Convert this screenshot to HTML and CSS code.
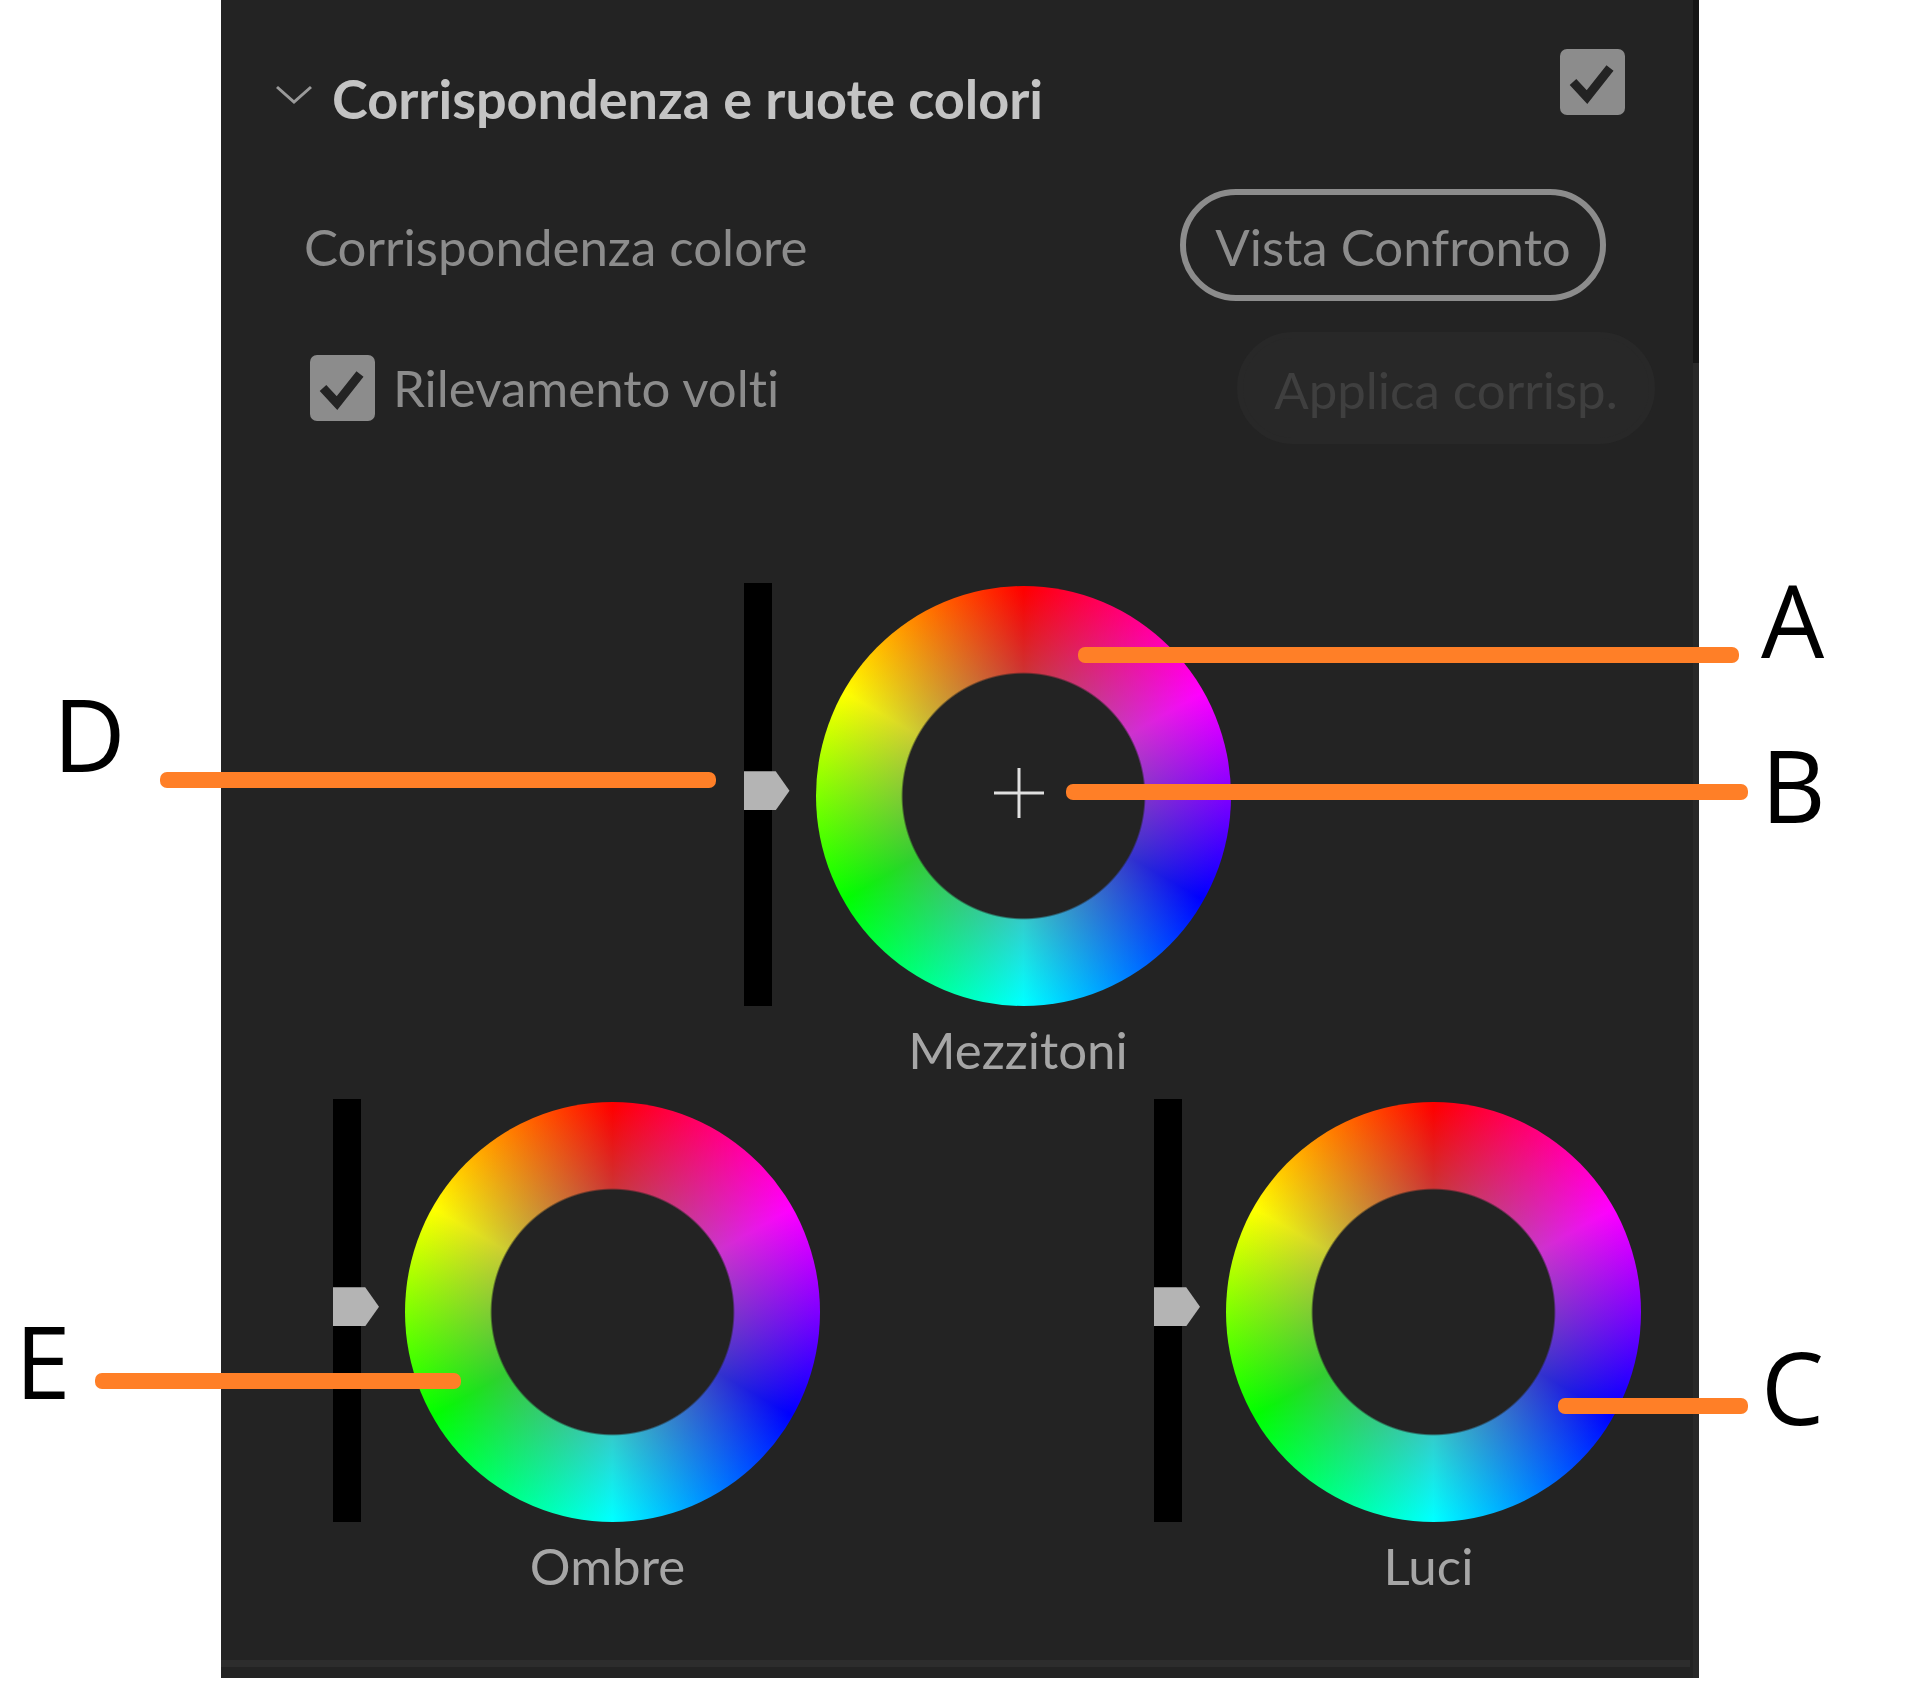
FILE: index.html
```html
<!DOCTYPE html>
<html lang="it">
  <head>
    <meta charset="utf-8">
    <meta name="viewport" content="width=device-width, initial-scale=1">
    <title>Corrispondenza e ruote colori</title>
    <link rel="stylesheet" href="styles.css">
  </head>
  <body>
    <main class="panel">
      <!-- Intestazione -->
      <header class="panel-header">
        <button class="toggle" type="button" aria-label="Comprimi sezione">
          <svg class="chevron" viewBox="0 0 36 28" aria-hidden="true">
            <path d="M1 2 L18 17 L35 2" fill="none" stroke="#9a9a9a" stroke-width="3"/>
          </svg>
        </button>
        <h1 class="title">Corrispondenza e ruote colori</h1>
        <span class="check header-check">
          <input type="checkbox" id="enable" aria-label="Attiva sezione" checked>
          <svg viewBox="0 0 65 66" aria-hidden="true"><path d="M13 33 L27 48 L50 19"/></svg>
        </span>
      </header>

      <!-- Corrispondenza colore -->
      <div class="row match-row">
        <span>Corrispondenza colore</span>
        <button class="button" type="button">Vista Confronto</button>
      </div>
      <div class="row face-row">
        <label class="check-label" for="faces">
          <span class="check">
            <input type="checkbox" id="faces" checked>
            <svg viewBox="0 0 65 66" aria-hidden="true"><path d="M13 33 L27 48 L50 19"/></svg>
          </span>
          Rilevamento volti
        </label>
        <button class="button apply" type="button" disabled>Applica corrisp.</button>
      </div>

      <!-- Ruote colori -->
      <section class="wheels">
        <div class="unit midtones">
          <input class="slider" id="mid" type="range" min="0" max="100" value="51">
          <div class="wheel">
            <svg class="cross" viewBox="0 0 50 50" aria-hidden="true">
              <path d="M0 25 H50 M25 0 V50" stroke="#e0e0e0" stroke-width="3"/>
            </svg>
          </div>
          <label class="wheel-label" for="mid">Mezzitoni</label>
        </div>
        <div class="unit">
          <input class="slider" id="shadows" type="range" min="0" max="100" value="51">
          <div class="wheel"></div>
          <label class="wheel-label" for="shadows">Ombre</label>
        </div>
        <div class="unit highlights">
          <input class="slider" id="lights" type="range" min="0" max="100" value="51">
          <div class="wheel"></div>
          <label class="wheel-label" for="lights">Luci</label>
        </div>
      </section>

      <div class="divider"></div>
      <div class="scrollbar"></div>

      <!-- Richiami -->
      <span class="line line-a"></span><span class="letter letter-a">A</span>
      <span class="line line-b"></span><span class="letter letter-b">B</span>
      <span class="line line-c"></span><span class="letter letter-c">C</span>
      <span class="line line-d"></span><span class="letter letter-d">D</span>
      <span class="line line-e"></span><span class="letter letter-e">E</span>
    </main>
  </body>
</html>
```
FILE: styles.css
```css
* {
  box-sizing: border-box;
}

body {
  margin: 0;
  background: #fff;
  font-family: Lato, "Open Sans", sans-serif;
  font-size: 51px;
  line-height: 60px;
  font-variant-ligatures: none;
  color: #8c8c8c;
}

.panel {
  position: relative;
  max-width: 1478px;
  margin: 0 auto;
  padding: 49px 0 11px;
  background: #232323;
}

/* Intestazione */
.panel-header {
  display: flex;
  align-items: flex-end;
  height: 80px;
  padding: 0 74px 0 55px;
}

.toggle {
  display: flex;
  align-items: center;
  height: 60px;
  margin-right: 20px;
  padding: 0;
  border: 0;
  background: none;
}

.chevron {
  width: 36px;
  height: 28px;
}

.title {
  margin: 0;
  font-size: 54px;
  font-weight: bold;
  color: #c4c4c4;
}

.header-check {
  align-self: flex-start;
  margin-left: auto;
}

/* Caselle di controllo */
.check {
  display: grid;
  width: 65px;
  height: 66px;
}

.check input,
.check svg {
  grid-area: 1 / 1;
  width: 100%;
  height: 100%;
  margin: 0;
}

.check input {
  appearance: none;
  border-radius: 7px;
  background: #8c8c8c;
}

.check svg {
  fill: none;
  stroke: #232323;
  stroke-width: 9;
  pointer-events: none;
  visibility: hidden;
}

.check input:checked + svg {
  visibility: visible;
}

.check-label {
  display: flex;
  align-items: center;
  gap: 18px;
}

/* Righe */
.row {
  display: flex;
  justify-content: space-between;
}

.match-row {
  align-items: baseline;
  margin-top: 60px;
  padding: 0 93px 0 83px;
}

.face-row {
  align-items: center;
  margin-top: 31px;
  padding: 0 44px 0 89px;
}

.button {
  min-width: 426px;
  padding: 22px 0 18px;
  border: 6px solid #8c8c8c;
  border-radius: 56px;
  background: none;
  font: inherit;
  color: #8c8c8c;
}

.apply {
  min-width: 418px;
  border-color: #282828;
  background: #282828;
  color: #3f3f3f;
}

/* Ruote colori */
.wheels {
  display: grid;
  grid-template-columns: 1fr 1fr;
  row-gap: 19px;
  margin-top: 139px;
  padding: 0 58px 64px 112px;
}

.unit {
  display: grid;
  grid-template-columns: 46px 415px;
  column-gap: 26px;
  justify-content: start;
}

.midtones {
  grid-column: 1 / 3;
  justify-content: center;
}

.highlights {
  justify-content: end;
}

.wheel {
  display: flex;
  align-items: center;
  justify-content: center;
  height: 420px;
  margin-top: 3px;
  border-radius: 50%;
  background:
    radial-gradient(closest-side, #232323 58%, rgba(128, 128, 128, 0.4) 59%, rgba(128, 128, 128, 0) 98%),
    conic-gradient(#f00, #f0f, #00f, #0ff, #0f0, #ff0, #f00);
}

.cross {
  width: 50px;
  height: 50px;
  margin: 0 8px 6px 0;
}

.wheel-label {
  grid-column: 2;
  margin-top: 14px;
  padding-right: 10px;
  text-align: center;
  color: #a6a6a6;
}

.slider {
  appearance: none;
  writing-mode: vertical-lr;
  direction: rtl;
  width: 46px;
  height: 423px;
  margin: 0;
  background: linear-gradient(#000, #000) left / 28px 100% no-repeat;
}

.slider::-webkit-slider-thumb {
  appearance: none;
  width: 46px;
  height: 39px;
  background: #b4b4b4;
  clip-path: polygon(0 0, 70% 0, 100% 50%, 70% 100%, 0 100%);
}

.divider {
  height: 7px;
  margin-right: 9px;
  background: #2d2d2d;
}

.scrollbar {
  position: absolute;
  top: 0;
  right: 0;
  bottom: 0;
  width: 6px;
  background: linear-gradient(#161616 363px, #292929 363px);
}

/* Richiami */
.line {
  position: absolute;
  height: 16px;
  border-radius: 7px;
  background: #ff7f27;
}

.line-a { top: 647px; left: 857px; width: 661px; }
.line-b { top: 784px; left: 845px; width: 682px; }
.line-c { top: 1398px; left: 1337px; width: 190px; }
.line-d { top: 772px; left: -61px; width: 556px; }
.line-e { top: 1373px; left: -126px; width: 366px; }

.letter {
  position: absolute;
  font-family: "Open Sans", sans-serif;
  font-size: 100px;
  line-height: 100px;
  color: #000;
}

.letter-a { top: 569px; left: 1540px; }
.letter-b { top: 734px; left: 1540px; }
.letter-c { top: 1336px; left: 1540px; }
.letter-d { top: 683px; left: -168px; }
.letter-e { top: 1310px; left: -206px; }
```
